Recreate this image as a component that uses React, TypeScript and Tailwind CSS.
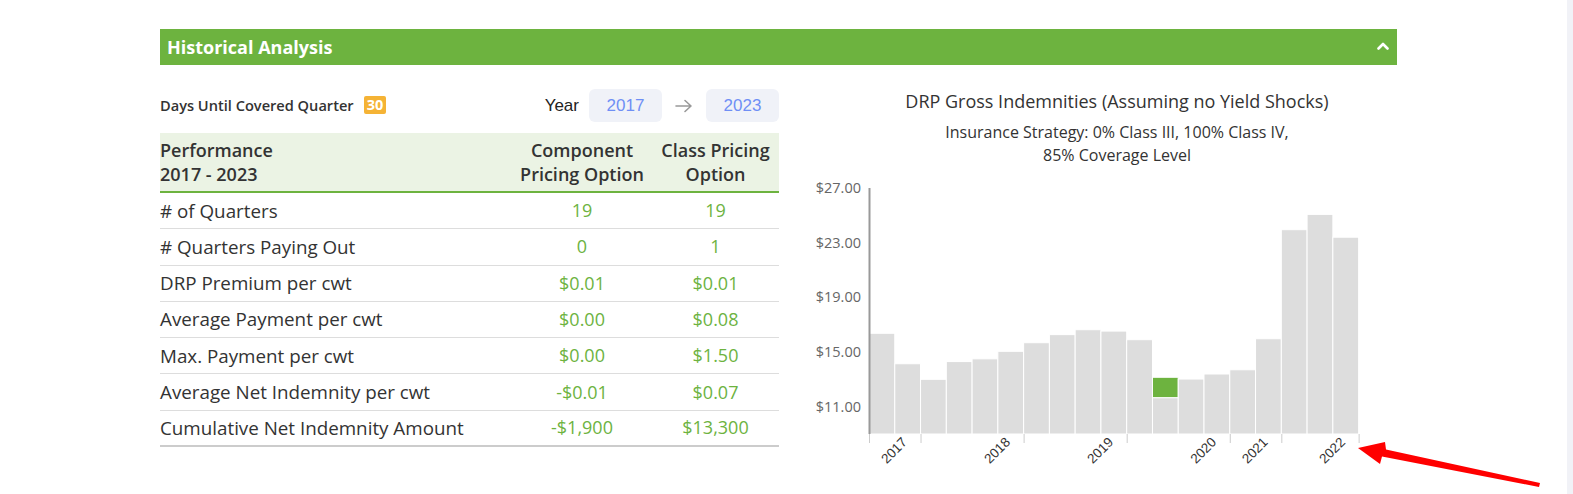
import React from "react";

const rows = [
  ["# of Quarters", "19", "19"],
  ["# Quarters Paying Out", "0", "1"],
  ["DRP Premium per cwt", "$0.01", "$0.01"],
  ["Average Payment per cwt", "$0.00", "$0.08"],
  ["Max. Payment per cwt", "$0.00", "$1.50"],
  ["Average Net Indemnity per cwt", "-$0.01", "$0.07"],
  ["Cumulative Net Indemnity Amount", "-$1,900", "$13,300"],
];

// quarterly gross indemnity values (gray) and the green "paid" part
const bars = [
  16.37, 14.14, 13.0, 14.3, 14.5, 15.05, 15.68, 16.27, 16.63, 16.53, 15.9, 11.66, 13.02, 13.39, 13.7,
  15.97, 23.95, 25.07, 23.4,
];
const paid: Record<number, number> = { 11: 13.15 };

const X0 = 869;
const STEP = 25.77;
const BASE = 434;
const PX = 13.667;
const yOf = (v: number) => BASE - (v - 9) * PX;

const ticks = [0, 2, 6, 10, 14, 16, 19];
const years: [number, string][] = [
  [0, "2017"],
  [4, "2018"],
  [8, "2019"],
  [12, "2020"],
  [14, "2021"],
  [17, "2022"],
];

function Chart() {
  return (
    <svg width={597} height={300} className="block">
      <g transform="translate(-800,-174)">
        {[27, 23, 19, 15, 11].map((v) => (
          <text
            key={v}
            x={861}
            y={yOf(v) + 5}
            textAnchor="end"
            fontSize={14.5}
            fill="#666"
            fontFamily="'Open Sans', sans-serif"
          >
            ${v.toFixed(2)}
          </text>
        ))}
        {bars.map((v, i) => {
          const x = X0 + i * STEP;
          return (
            <g key={i}>
              <rect x={x} y={yOf(v)} width={STEP} height={BASE - yOf(v)} fill="#dddddd" stroke="#fff" strokeWidth={1} />
              {paid[i] && (
                <rect x={x} y={yOf(paid[i])} width={STEP} height={yOf(v) - yOf(paid[i])} fill="#6db33f" stroke="#fff" strokeWidth={1} />
              )}
            </g>
          );
        })}
        <line x1={869.5} y1={188} x2={869.5} y2={434} stroke="#999" strokeWidth={2} />
        {ticks.map((t) => (
          <line key={t} x1={X0 + t * STEP + 0.5} y1={434} x2={X0 + t * STEP + 0.5} y2={443} stroke="#ccc" strokeWidth={1} />
        ))}
        {years.map(([i, y]) => (
          <text
            key={y}
            transform={`translate(${X0 + (i + 0.5) * STEP + 26},443) rotate(-45)`}
            textAnchor="end"
            fontSize={13.5}
            fill="#333"
            fontFamily="'Liberation Sans', Arial, sans-serif"
          >
            {y}
          </text>
        ))}
      </g>
    </svg>
  );
}

export default function App() {
  return (
    <div className="relative flex w-full h-[494px] bg-white font-['Open_Sans',sans-serif] text-[#333] overflow-hidden">
      <div className="flex-1">
        <div className="ml-[160px] w-[1237px] mt-[29px]">
          <div className="h-[36px] bg-[#6db33f] flex items-center justify-between pl-[7px] pr-[5px]">
            <span className="text-white font-bold text-[18px]">Historical Analysis</span>
            <svg width="12" height="8" viewBox="0 0 12 8" className="mr-[3px] -mt-[2px]">
              <path d="M1.5 6.5 L6 2 L10.5 6.5" fill="none" stroke="#fff" strokeWidth={2.6} strokeLinecap="round" strokeLinejoin="round" />
            </svg>
          </div>

          <div className="flex gap-[21px]">
            {/* left: stats table */}
            <div className="w-[619px] pt-[24px]">
              <div className="flex items-center justify-between h-[33px]">
                <div className="flex items-center">
                  <span className="text-[14.6px] font-semibold text-[#333]">Days Until Covered Quarter</span>
                  <span className="ml-[10px] bg-[#f5b335] text-white text-[14.5px] font-bold leading-[18px] px-[3px] rounded-[2px]">
                    30
                  </span>
                </div>
                <div className="flex items-center font-['Liberation_Sans',Arial,sans-serif] text-[17px]">
                  <span className="text-[#222] mr-[10px]">Year</span>
                  <div className="w-[73px] h-[33px] rounded-md bg-[#f0f2f8] text-[#6f8ff5] flex items-center justify-center">2017</div>
                  <svg width="44" height="16" viewBox="0 0 44 16">
                    <path d="M14 8 H29 M23 2.5 L29 8 L23 13.5" fill="none" stroke="#999" strokeWidth={1.6} strokeLinecap="round" strokeLinejoin="round" />
                  </svg>
                  <div className="w-[73px] h-[33px] rounded-md bg-[#f0f2f8] text-[#6f8ff5] flex items-center justify-center">2023</div>
                </div>
              </div>

              <div className="mt-[11px]">
                <div className="grid grid-cols-[352px_140px_127px] bg-[#ebf3e4] border-b-2 border-[#6db33f] h-[60px] items-center text-[18px] font-semibold leading-[24px]">
                  <div>
                    Performance
                    <br />
                    2017 - 2023
                  </div>
                  <div className="text-center">
                    Component
                    <br />
                    Pricing Option
                  </div>
                  <div className="text-center">
                    Class Pricing
                    <br />
                    Option
                  </div>
                </div>
                {rows.map((r, i) => (
                  <div
                    key={r[0]}
                    className={`grid grid-cols-[352px_140px_127px] items-center h-[36.3px] text-[18px] ${
                      i === rows.length - 1 ? "border-b-2 border-[#cccccc]" : "border-b border-[#dddddd]"
                    }`}
                  >
                    <div className="text-[18.8px] text-[#333]">{r[0]}</div>
                    <div className="text-center text-[#6db33f]">{r[1]}</div>
                    <div className="text-center text-[#6db33f]">{r[2]}</div>
                  </div>
                ))}
              </div>
            </div>

            {/* right: chart */}
            <div className="w-[597px] pt-[24px]">
              <div className="ml-[72px] w-[490px] text-center">
                <div className="text-[18px] leading-[24px] text-[#333] whitespace-nowrap">
                  DRP Gross Indemnities (Assuming no Yield Shocks)
                </div>
                <div className="mt-[8px] text-[16px] leading-[23px] text-[#333]">
                  Insurance Strategy: 0% Class III, 100% Class IV,
                  <br />
                  85% Coverage Level
                </div>
              </div>
              <div className="mt-[7px]">
                <Chart />
              </div>
            </div>
          </div>
        </div>
      </div>
      <div className="w-[6px] bg-[#f1f2f7]" />

      <svg className="absolute left-0 top-0 pointer-events-none" width={1573} height={494}>
        <polygon
          points="1358,448 1385,442 1386,449.5 1540,483 1539,487 1382,456.5 1380,464"
          fill="#ff0000"
        />
      </svg>
    </div>
  );
}
